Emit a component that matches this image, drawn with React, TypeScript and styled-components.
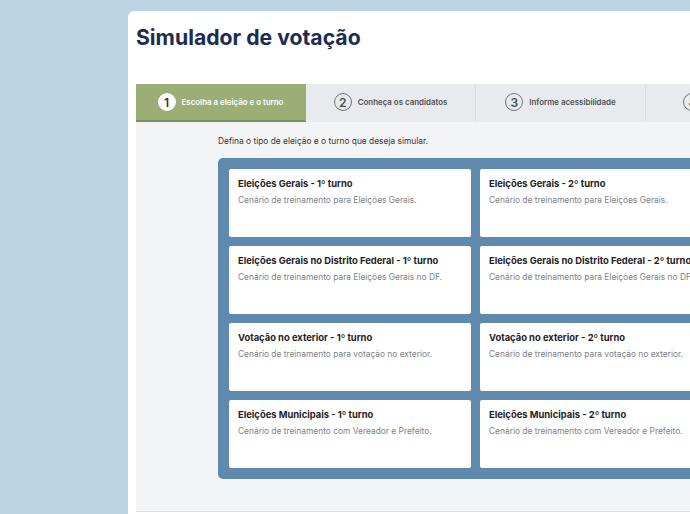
import React from "react";
import styled, { createGlobalStyle } from "styled-components";

const GlobalStyle = createGlobalStyle`
  html, body {
    margin: 0;
    padding: 0;
    background: #bcd3e3;
    overflow: hidden;
    font-family: Inter, "Noto Sans", sans-serif;
  }
`;

const steps = [
  "Escolha a eleição e o turno",
  "Conheça os candidatos",
  "Informe acessibilidade",
  "Confirme seu voto",
];

const options = [
  { title: "Eleições Gerais - 1º turno", desc: "Cenário de treinamento para Eleições Gerais." },
  { title: "Eleições Gerais - 2º turno", desc: "Cenário de treinamento para Eleições Gerais." },
  { title: "Eleições Gerais no Distrito Federal - 1º turno", desc: "Cenário de treinamento para Eleições Gerais no DF." },
  { title: "Eleições Gerais no Distrito Federal - 2º turno", desc: "Cenário de treinamento para Eleições Gerais no DF." },
  { title: "Votação no exterior - 1º turno", desc: "Cenário de treinamento para votação no exterior." },
  { title: "Votação no exterior - 2º turno", desc: "Cenário de treinamento para votação no exterior." },
  { title: "Eleições Municipais - 1º turno", desc: "Cenário de treinamento com Vereador e Prefeito." },
  { title: "Eleições Municipais - 2º turno", desc: "Cenário de treinamento com Vereador e Prefeito." },
];

const App = () => {
  return (
    <>
      <GlobalStyle />
      <Page>
        <Panel>
          <Title>Simulador de votação</Title>
          <Stepper>
            {steps.map((label, i) => (
              <Step key={label} active={i === 0}>
                <StepNumber active={i === 0}>{i + 1}</StepNumber>
                <StepLabel>{label}</StepLabel>
              </Step>
            ))}
          </Stepper>
          <Content>
            <Intro>Defina o tipo de eleição e o turno que deseja simular.</Intro>
            <Grid>
              {options.map((o) => (
                <Card key={o.title}>
                  <CardTitle>{o.title}</CardTitle>
                  <CardDesc>{o.desc}</CardDesc>
                </Card>
              ))}
            </Grid>
          </Content>
        </Panel>
      </Page>
    </>
  );
};

const Page = styled.div`
  width: 690px;
  height: 514px;
  padding-top: 11px;
  padding-left: 128px;
  box-sizing: border-box;
  overflow: hidden;
`;

const Panel = styled.div`
  width: 620px;
  height: 503px;
  background: #ffffff;
  border-top-left-radius: 6px;
  padding-left: 8px;
  box-sizing: border-box;
  display: flex;
  flex-direction: column;
`;

const Title = styled.h1`
  margin: 0;
  padding-top: 13px;
  height: 73px;
  box-sizing: border-box;
  font-size: 21.2px;
  font-weight: 700;
  color: #1c2d52;
`;

const Stepper = styled.div`
  display: flex;
  height: 38px;
  background: #e8eaed;
`;

const Step = styled.div<{ active: boolean }>`
  flex: 0 0 170px;
  display: flex;
  align-items: center;
  justify-content: center;
  gap: 6px;
  box-sizing: border-box;
  background: ${(p) => (p.active ? "#9aae75" : "#e8eaed")};
  border-bottom: 2px solid ${(p) => (p.active ? "#7c8f5e" : "#e8eaed")};
  border-right: 1px solid ${(p) => (p.active ? "#9aae75" : "#d9dce0")};
  color: ${(p) => (p.active ? "#ffffff" : "#4b4f57")};
`;

const StepNumber = styled.span<{ active: boolean }>`
  width: 18px;
  height: 18px;
  border-radius: 50%;
  box-sizing: border-box;
  display: flex;
  align-items: center;
  justify-content: center;
  font-size: 12px;
  font-weight: 600;
  background: ${(p) => (p.active ? "#ffffff" : "transparent")};
  color: ${(p) => (p.active ? "#2e3440" : "#4b4f57")};
  border: ${(p) => (p.active ? "none" : "1.5px solid #70747c")};
`;

const StepLabel = styled.span`
  font-size: 7.9px;
  font-weight: 600;
  white-space: nowrap;
`;

const Content = styled.div`
  flex: 1;
  background: #f3f4f6;
  border-bottom: 1px solid #dcdde0;
  padding: 14px 0 0 82px;
  box-sizing: border-box;
  max-height: 390px;
`;

const Intro = styled.p`
  margin: 0 0 12px;
  font-size: 8.4px;
  color: #333840;
`;

const Grid = styled.div`
  display: grid;
  grid-template-columns: 242px 242px;
  grid-auto-rows: 68px;
  gap: 9px;
  padding: 11px;
  width: max-content;
  background: #5f89ad;
  border-radius: 5px;
`;

const Card = styled.div`
  background: #ffffff;
  border-radius: 2px;
  padding: 9px 9px;
  box-sizing: border-box;
`;

const CardTitle = styled.div`
  font-size: 9.4px;
  font-weight: 700;
  color: #1f2227;
  white-space: nowrap;
  margin-bottom: 6px;
`;

const CardDesc = styled.div`
  font-size: 8.4px;
  color: #7d8188;
  white-space: nowrap;
`;

export default App;
